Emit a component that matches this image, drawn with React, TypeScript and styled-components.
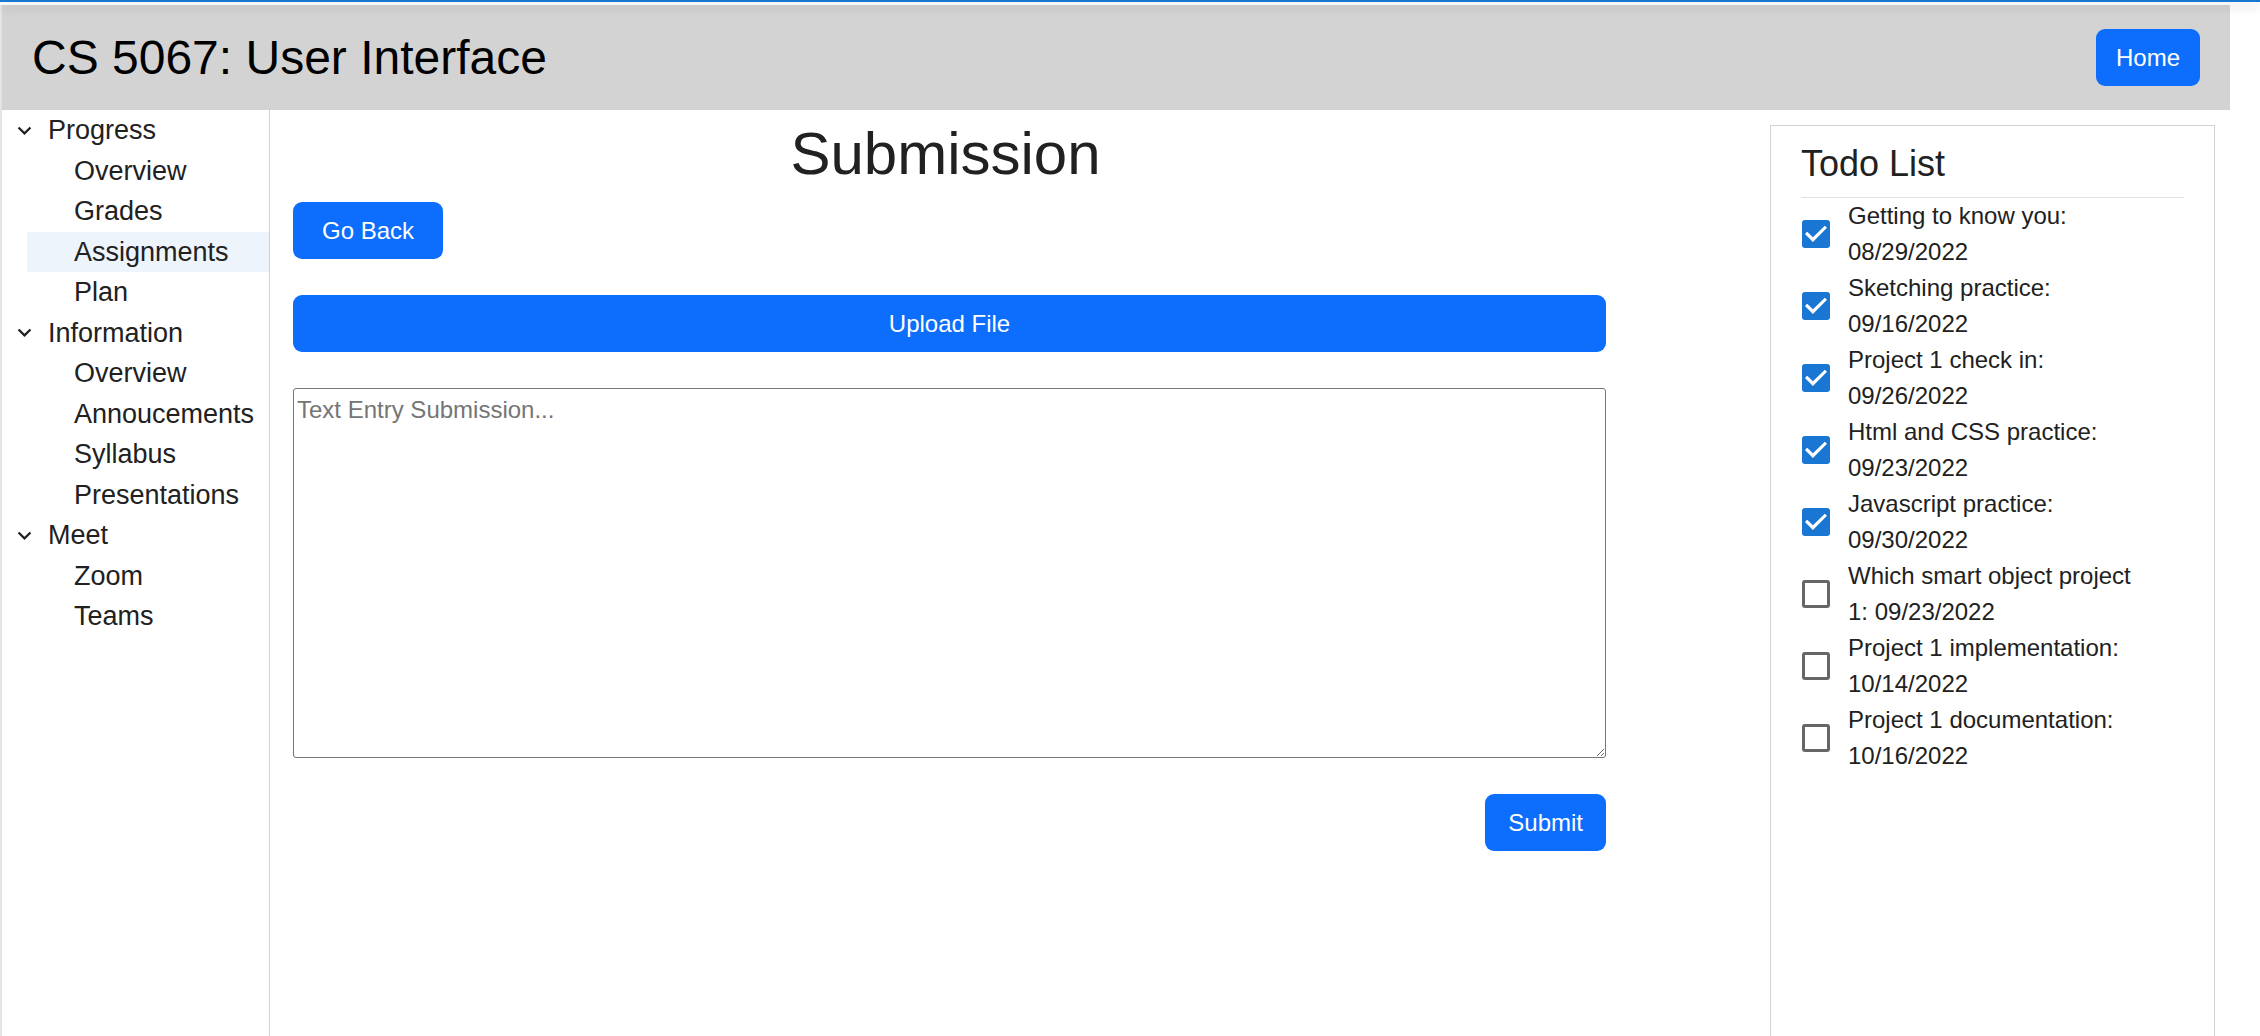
import React, { useId, useState } from "react";
import styled, { createGlobalStyle } from "styled-components";

const GlobalStyle = createGlobalStyle`
  *, *::before, *::after { box-sizing: border-box; }
  body {
    margin: 0;
    background: #fff;
    color: #212121;
    font-family: "Liberation Sans", Arial, sans-serif;
    font-size: 24px;
    line-height: 36px;
  }
  #root { overflow: hidden; }
`;

const Page = styled.div`
  display: flex;
  flex-direction: column;
  min-height: 100vh;
`;

const AppBar = styled.div`
  position: relative;
  height: 2px;
  background: #1976d2;
  box-shadow: 0 3px 6px -1px rgba(0, 0, 0, 0.2), 0 6px 8px 0 rgba(0, 0, 0, 0.14),
    0 2px 15px 0 rgba(0, 0, 0, 0.12);
  z-index: 1;
`;

const Shell = styled.div`
  display: flex;
  flex-direction: column;
  flex: 1;
  margin: 3px 30px 0 0;
  border-left: 2px solid #e4e4e4;
`;

const Header = styled.header`
  display: flex;
  align-items: center;
  justify-content: space-between;
  padding: 24px 30px;
  background: #d3d3d3;
`;

const CourseTitle = styled.h1`
  margin: 0;
  color: #000;
  font-size: 48px;
  font-weight: 400;
  line-height: 56px;
`;

const Button = styled.button<{ $pad?: number }>`
  padding: 0 ${(p) => p.$pad ?? 20}px;
  border: 0;
  border-radius: 9px;
  background: #0d6efd;
  color: #fff;
  font: inherit;
  line-height: 57px;
  cursor: pointer;
`;

const Columns = styled.div`
  display: flex;
  flex: 1;
`;

const Sidebar = styled.nav`
  flex: 0 0 268px;
  border-right: 1px solid #d3d3d3;
  font-size: 27px;
  line-height: 1.5;
`;

const Group = styled.div`
  padding-left: 9px;
`;

const GroupToggle = styled.button`
  display: flex;
  align-items: center;
  gap: 10px;
  width: 100%;
  padding: 0;
  border: 0;
  background: none;
  color: inherit;
  font: inherit;
  text-align: left;
  cursor: pointer;
`;

const Chevron = styled.svg<{ $open: boolean }>`
  width: 27px;
  height: 27px;
  fill: currentColor;
  transform: rotate(${(p) => (p.$open ? 0 : -90)}deg);
`;

const GroupItems = styled.ul`
  margin: 0;
  padding: 0 0 0 16px;
  list-style: none;
`;

const NavLink = styled.a<{ $selected?: boolean }>`
  display: block;
  padding-left: 47px;
  background: ${(p) => (p.$selected ? "#edf4fb" : "transparent")};
  color: inherit;
  text-decoration: none;
`;

const Main = styled.main`
  flex: 1;
  padding: 8px 149px 0 0;
`;

const PageTitle = styled.h2`
  margin: 0 0 13px;
  font-size: 60px;
  font-weight: 400;
  line-height: 71px;
  text-align: center;
`;

const Body = styled.div`
  display: flex;
  flex-direction: column;
  align-items: flex-start;
  gap: 36px;
  padding: 0 15px 0 23px;
`;

const Form = styled.form`
  display: flex;
  flex-direction: column;
  gap: 36px;
  width: 100%;
`;

const Entry = styled.textarea`
  display: block;
  width: 100%;
  height: 370px;
  padding: 3px;
  border: 1px solid #767676;
  border-radius: 3px;
  font: inherit;
  resize: both;
  &::placeholder { color: #757575; }
`;

const Actions = styled.div`
  display: flex;
  justify-content: flex-end;
`;

const TodoPanel = styled.aside`
  flex: 0 0 445px;
  margin: 15px 15px 0 0;
  padding: 14px 30px;
  border: 1px solid #d3d3d3;
  border-bottom: 0;
`;

const TodoTitle = styled.h3`
  margin: 0;
  padding-bottom: 9px;
  border-bottom: 1px solid #e0e0e0;
  font-size: 36px;
  font-weight: 400;
  line-height: 48px;
`;

const TodoList = styled.ul`
  margin: 0;
  padding: 0;
  list-style: none;
`;

const TodoItem = styled.li`
  display: flex;
  align-items: center;
  gap: 18px;
  padding-left: 1px;
`;

const Tick = styled.input`
  flex: none;
  display: grid;
  place-content: center;
  appearance: none;
  width: 28px;
  height: 28px;
  margin: 0;
  border: 3px solid #666;
  border-radius: 3px;
  background: #fff;
  cursor: pointer;

  &::before {
    content: "";
    width: 22px;
    height: 22px;
    background: #fff;
    clip-path: polygon(36% 86%, 0 50%, 10% 40%, 36% 65%, 90% 12%, 100% 22%);
    visibility: hidden;
  }
  &:checked {
    border-color: #1976d2;
    background: #1976d2;
  }
  &:checked::before { visibility: visible; }
`;

const TodoLabel = styled.label`
  width: 302px;
`;

const groups = [
  { name: "Progress", items: ["Overview", "Grades", "Assignments", "Plan"] },
  { name: "Information", items: ["Overview", "Annoucements", "Syllabus", "Presentations"] },
  { name: "Meet", items: ["Zoom", "Teams"] },
];

const todos = [
  { text: "Getting to know you", due: "08/29/2022", done: true },
  { text: "Sketching practice", due: "09/16/2022", done: true },
  { text: "Project 1 check in", due: "09/26/2022", done: true },
  { text: "Html and CSS practice", due: "09/23/2022", done: true },
  { text: "Javascript practice", due: "09/30/2022", done: true },
  { text: "Which smart object project 1", due: "09/23/2022", done: false },
  { text: "Project 1 implementation", due: "10/14/2022", done: false },
  { text: "Project 1 documentation", due: "10/16/2022", done: false },
];

function NavGroup({ name, items }: { name: string; items: string[] }) {
  const [open, setOpen] = useState(true);
  return (
    <Group>
      <GroupToggle type="button" aria-expanded={open} onClick={() => setOpen(!open)}>
        <Chevron $open={open} viewBox="0 0 24 24" aria-hidden="true">
          <path d="M7.41 8.59 12 13.17l4.59-4.58L18 10l-6 6-6-6z" />
        </Chevron>
        {name}
      </GroupToggle>
      {open && (
        <GroupItems>
          {items.map((item) => (
            <li key={item}>
              <NavLink href="#" $selected={item === "Assignments"}>
                {item}
              </NavLink>
            </li>
          ))}
        </GroupItems>
      )}
    </Group>
  );
}

function Todo({ text, due, done }: { text: string; due: string; done: boolean }) {
  const id = useId();
  return (
    <TodoItem>
      <Tick id={id} type="checkbox" defaultChecked={done} />
      <TodoLabel htmlFor={id}>{`${text}: ${due}`}</TodoLabel>
    </TodoItem>
  );
}

export default function App() {
  return (
    <>
      <GlobalStyle />
      <Page>
        <AppBar />
        <Shell>
          <Header>
            <CourseTitle>CS 5067: User Interface</CourseTitle>
            <Button type="button">Home</Button>
          </Header>
          <Columns>
            <Sidebar>
              {groups.map((g) => (
                <NavGroup key={g.name} {...g} />
              ))}
            </Sidebar>
            <Main>
              <PageTitle>Submission</PageTitle>
              <Body>
                <Button type="button" $pad={29}>
                  Go Back
                </Button>
                <Form onSubmit={(e) => e.preventDefault()}>
                  <Button type="button">Upload File</Button>
                  <Entry aria-label="Text entry submission" placeholder="Text Entry Submission..." />
                  <Actions>
                    <Button type="submit" $pad={23}>
                      Submit
                    </Button>
                  </Actions>
                </Form>
              </Body>
            </Main>
            <TodoPanel>
              <TodoTitle>Todo List</TodoTitle>
              <TodoList>
                {todos.map((t) => (
                  <Todo key={t.text} {...t} />
                ))}
              </TodoList>
            </TodoPanel>
          </Columns>
        </Shell>
      </Page>
    </>
  );
}
